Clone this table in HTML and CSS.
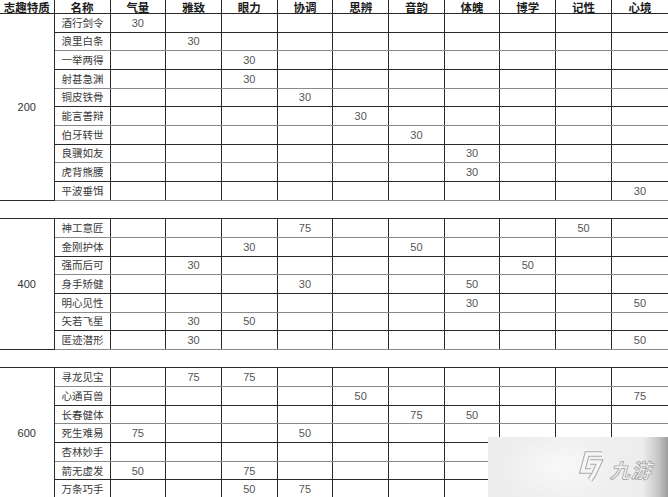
FILE: index.html
```html
<!DOCTYPE html>
<html lang="zh">
<head>
<meta charset="utf-8">
<title>志趣特质</title>
<link rel="stylesheet" href="styles.css">
</head>
<body>
<div class="page">
<table class="sheet">
<colgroup>
<col class="c-grp"><col class="c-name">
<col class="c-v"><col class="c-v"><col class="c-v"><col class="c-v"><col class="c-v">
<col class="c-v"><col class="c-v"><col class="c-v"><col class="c-v"><col class="c-last">
</colgroup>
<thead>
<tr class="head"><th>志趣特质</th><th>名称</th><th>气量</th><th>雅致</th><th>眼力</th><th>协调</th><th>思辨</th><th>音韵</th><th>体魄</th><th>博学</th><th>记性</th><th>心境</th></tr>
</thead>
<tbody>
<tr class="r"><td class="grp" rowspan="10">200</td><td class="nm">酒行剑令</td><td>30</td><td></td><td></td><td></td><td></td><td></td><td></td><td></td><td></td><td></td></tr>
<tr class="r"><td class="nm">浪里白条</td><td></td><td>30</td><td></td><td></td><td></td><td></td><td></td><td></td><td></td><td></td></tr>
<tr class="r"><td class="nm">一举两得</td><td></td><td></td><td>30</td><td></td><td></td><td></td><td></td><td></td><td></td><td></td></tr>
<tr class="r"><td class="nm">射甚急渊</td><td></td><td></td><td>30</td><td></td><td></td><td></td><td></td><td></td><td></td><td></td></tr>
<tr class="r"><td class="nm">铜皮铁骨</td><td></td><td></td><td></td><td>30</td><td></td><td></td><td></td><td></td><td></td><td></td></tr>
<tr class="r"><td class="nm">能言善辩</td><td></td><td></td><td></td><td></td><td>30</td><td></td><td></td><td></td><td></td><td></td></tr>
<tr class="r"><td class="nm">伯牙转世</td><td></td><td></td><td></td><td></td><td></td><td>30</td><td></td><td></td><td></td><td></td></tr>
<tr class="r"><td class="nm">良骥如友</td><td></td><td></td><td></td><td></td><td></td><td></td><td>30</td><td></td><td></td><td></td></tr>
<tr class="r"><td class="nm">虎背熊腰</td><td></td><td></td><td></td><td></td><td></td><td></td><td>30</td><td></td><td></td><td></td></tr>
<tr class="r"><td class="nm">平波垂饵</td><td></td><td></td><td></td><td></td><td></td><td></td><td></td><td></td><td></td><td>30</td></tr>
<tr class="gap"><td colspan="12"></td></tr>
<tr class="r"><td class="grp" rowspan="7">400</td><td class="nm">神工意匠</td><td></td><td></td><td></td><td>75</td><td></td><td></td><td></td><td></td><td>50</td><td></td></tr>
<tr class="r"><td class="nm">金刚护体</td><td></td><td></td><td>30</td><td></td><td></td><td>50</td><td></td><td></td><td></td><td></td></tr>
<tr class="r"><td class="nm">强而后可</td><td></td><td>30</td><td></td><td></td><td></td><td></td><td></td><td>50</td><td></td><td></td></tr>
<tr class="r"><td class="nm">身手矫健</td><td></td><td></td><td></td><td>30</td><td></td><td></td><td>50</td><td></td><td></td><td></td></tr>
<tr class="r"><td class="nm">明心见性</td><td></td><td></td><td></td><td></td><td></td><td></td><td>30</td><td></td><td></td><td>50</td></tr>
<tr class="r"><td class="nm">矢若飞星</td><td></td><td>30</td><td>50</td><td></td><td></td><td></td><td></td><td></td><td></td><td></td></tr>
<tr class="r"><td class="nm">匿迹潜形</td><td></td><td>30</td><td></td><td></td><td></td><td></td><td></td><td></td><td></td><td>50</td></tr>
<tr class="gap"><td colspan="12"></td></tr>
<tr class="r"><td class="grp" rowspan="7">600</td><td class="nm">寻龙见宝</td><td></td><td>75</td><td>75</td><td></td><td></td><td></td><td></td><td></td><td></td><td></td></tr>
<tr class="r"><td class="nm">心通百兽</td><td></td><td></td><td></td><td></td><td>50</td><td></td><td></td><td></td><td></td><td>75</td></tr>
<tr class="r"><td class="nm">长春健体</td><td></td><td></td><td></td><td></td><td></td><td>75</td><td>50</td><td></td><td></td><td></td></tr>
<tr class="r"><td class="nm">死生难易</td><td>75</td><td></td><td></td><td>50</td><td></td><td></td><td></td><td></td><td></td><td></td></tr>
<tr class="r"><td class="nm">杏林妙手</td><td></td><td></td><td></td><td></td><td></td><td></td><td></td><td></td><td></td><td></td></tr>
<tr class="r"><td class="nm">箭无虚发</td><td>50</td><td></td><td>75</td><td></td><td></td><td></td><td></td><td></td><td></td><td></td></tr>
<tr class="r"><td class="nm">万条巧手</td><td></td><td></td><td>50</td><td>75</td><td></td><td></td><td></td><td></td><td></td><td></td></tr>
</tbody>
</table>

<div class="watermark">
  <svg class="wm-icon" viewBox="0 0 28 32" width="28" height="32" aria-hidden="true">
    <path class="wm-out" d="M26 4 H11 L6.5 21 H15 M14 12 H23.5 L18 24 L14 30"/>
    <path class="wm-in" d="M26 4 H11 L6.5 21 H15 M14 12 H23.5 L18 24 L14 30"/>
  </svg>
  <span class="wm-text">九游</span>
</div>
</div>
</body>
</html>
```
FILE: styles.css
```css
html, body {
  margin: 0;
  padding: 0;
  background: #ffffff;
}
.page {
  position: relative;
  width: 668px;
  height: 497px;
  overflow: hidden;
}
.sheet {
  border-collapse: collapse;
  table-layout: fixed;
  width: 669px;
  font-family: "Noto Sans CJK SC", "Noto Sans", sans-serif;
  color: #444;
}
.c-grp { width: 54px; }
.c-name { width: 56px; }
.c-v { width: 55.7px; }
.c-last { width: 57px; }

.sheet th, .sheet td {
  padding: 0;
  border: 1px solid #2a2a2a;
  text-align: center;
  vertical-align: middle;
  white-space: nowrap;
  line-height: 14px;
}
.head th {
  height: 12px;
  padding-top: 1px;
  font-size: 11.5px;
  font-weight: bold;
  color: #1a1a1a;
  border-top: none;
  line-height: 12px;
}
.head th:first-child, .sheet td.grp { border-left: none; }
.sheet tr.gap td { border-left: none; }

.r td {
  height: 17.67px;
  font-family: "Liberation Sans", "Noto Sans CJK SC", sans-serif;
  font-size: 11px;
  color: #555;
  overflow: hidden;
}
.r:nth-child(even) td { border-bottom-color: #8a8a8a; }
.r td.grp + td + td + td + td + td + td + td + td { border-left-color: #8f8f8f; }
.sheet td.grp {
  font-size: 11px;
  color: #333;
  border-bottom-color: #2a2a2a;
}
.sheet td.nm {
  text-align: left;
  padding-left: 7px;
  font-family: "Noto Sans CJK SC", sans-serif;
  font-size: 10.5px;
  color: #3a3a3a;
}
.gap td {
  height: 17.67px;
  border-right: none;
}

.watermark {
  position: absolute;
  left: 488px;
  top: 437px;
  width: 180px;
  height: 60px;
  background:
    radial-gradient(ellipse 60px 30px at 70px 30px, rgba(255,255,255,0.55), rgba(255,255,255,0)),
    linear-gradient(to right, #ececec 0%, #f1f1f1 45%, #ededed 86%, #c4c4c4 95%, #9c9c9c 100%);
  display: flex;
  align-items: flex-start;
  gap: 8px;
  padding-left: 88px;
  padding-top: 13px;
  box-sizing: border-box;
}
.wm-icon {
  display: block;
}
.wm-out {
  fill: none;
  stroke: #a8a8a8;
  stroke-width: 5.5;
  stroke-linejoin: miter;
}
.wm-in {
  fill: none;
  stroke: #f6f6f6;
  stroke-width: 3.5;
  stroke-linejoin: miter;
}
.wm-text {
  font-family: "Noto Sans CJK SC", sans-serif;
  font-size: 20px;
  line-height: 20px;
  font-weight: bold;
  color: #f4f4f4;
  -webkit-text-stroke: 0.8px #a6a6a6;
  display: inline-block;
  transform: skewX(-16deg);
  letter-spacing: 1px;
  margin-top: 10px;
}
```
